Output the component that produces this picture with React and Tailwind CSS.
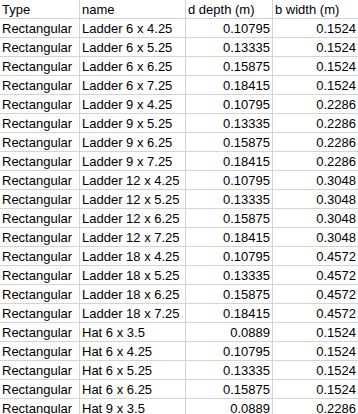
const rows = [
  ['Ladder 6 x 4.25', '0.10795', '0.1524'],
  ['Ladder 6 x 5.25', '0.13335', '0.1524'],
  ['Ladder 6 x 6.25', '0.15875', '0.1524'],
  ['Ladder 6 x 7.25', '0.18415', '0.1524'],
  ['Ladder 9 x 4.25', '0.10795', '0.2286'],
  ['Ladder 9 x 5.25', '0.13335', '0.2286'],
  ['Ladder 9 x 6.25', '0.15875', '0.2286'],
  ['Ladder 9 x 7.25', '0.18415', '0.2286'],
  ['Ladder 12 x 4.25', '0.10795', '0.3048'],
  ['Ladder 12 x 5.25', '0.13335', '0.3048'],
  ['Ladder 12 x 6.25', '0.15875', '0.3048'],
  ['Ladder 12 x 7.25', '0.18415', '0.3048'],
  ['Ladder 18 x 4.25', '0.10795', '0.4572'],
  ['Ladder 18 x 5.25', '0.13335', '0.4572'],
  ['Ladder 18 x 6.25', '0.15875', '0.4572'],
  ['Ladder 18 x 7.25', '0.18415', '0.4572'],
  ['Hat 6 x 3.5', '0.0889', '0.1524'],
  ['Hat 6 x 4.25', '0.10795', '0.1524'],
  ['Hat 6 x 5.25', '0.13335', '0.1524'],
  ['Hat 6 x 6.25', '0.15875', '0.1524'],
  ['Hat 9 x 3.5', '0.0889', '0.2286'],
]

const cell = 'h-[19px] border-r border-b border-[#d4d4d4] px-[2px] leading-[19px] whitespace-nowrap overflow-hidden'

export default function App() {
  return (
    <div className="h-[414px] w-[358px] overflow-hidden bg-white text-[13px] text-black" style={{ fontFamily: '"Liberation Sans", Arial, sans-serif' }}>
      <div className="grid grid-cols-[80px_106px_87px_100px]">
        <div className={cell}>Type</div>
        <div className={cell}>name</div>
        <div className={cell}>d depth (m)</div>
        <div className={cell}>b width (m)</div>
        {rows.map(([name, d, b]) => (
          <div key={name} className="contents">
            <div className={cell}>Rectangular</div>
            <div className={cell}>{name}</div>
            <div className={`${cell} text-right`}>{d}</div>
            <div className={`${cell} text-right pr-[16px]`}>{b}</div>
          </div>
        ))}
      </div>
    </div>
  )
}
